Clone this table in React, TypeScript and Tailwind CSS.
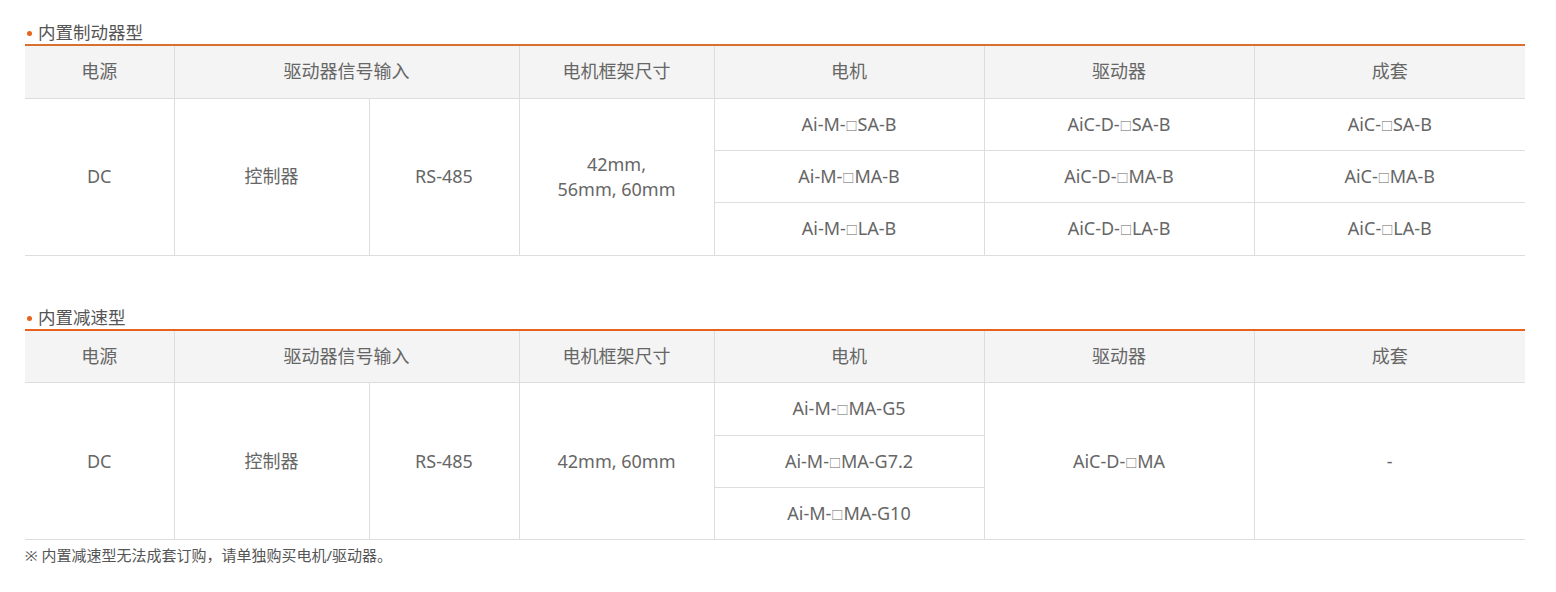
import React from "react";

const bd = "border-[#dddddd]";
const th = `h-[52px] bg-[#f4f4f4] font-normal text-center align-middle border-l ${bd}`;
const td = `h-[52.4px] text-center align-middle border-l border-b ${bd}`;

function Sq() {
  return <span className="text-[12px]">□</span>;
}

function Title({ children }: { children: React.ReactNode }) {
  return (
    <div className="flex items-center h-[22px] pl-[2px] text-[17.5px] text-[#555]">
      <span className="w-[5px] h-[5px] rounded-full bg-[#e8621c] mr-[6px] mt-[3px]" />
      {children}
    </div>
  );
}

function Header() {
  return (
    <thead>
      <tr className={`border-b ${bd}`}>
        <th className={th} style={{ borderLeft: "none" }}>电源</th>
        <th className={th} colSpan={2}>驱动器信号输入</th>
        <th className={th}>电机框架尺寸</th>
        <th className={th}>电机</th>
        <th className={th}>驱动器</th>
        <th className={th}>成套</th>
      </tr>
    </thead>
  );
}

function Cols() {
  return (
    <colgroup>
      <col className="w-[149px]" />
      <col className="w-[195px]" />
      <col className="w-[150px]" />
      <col className="w-[195px]" />
      <col className="w-[270px]" />
      <col className="w-[270px]" />
      <col className="w-[271px]" />
    </colgroup>
  );
}

export default function App() {
  return (
    <div
      className="w-[1556px] h-[592px] bg-white text-[#666] pt-[21px] pl-[25px]"
      style={{ fontFamily: '"Noto Sans", "Noto Sans CJK SC", sans-serif' }}
    >
      <div className="w-[1500px]">
        <Title>内置制动器型</Title>
        <div className="h-[2px] bg-[#d9702f] mt-[1px]" />
        <table className="w-[1500px] table-fixed border-collapse text-[18px]">
          <Cols />
          <Header />
          <tbody>
            <tr>
              <td className={td} style={{ borderLeft: "none" }} rowSpan={3}>DC</td>
              <td className={td} rowSpan={3}>控制器</td>
              <td className={td} rowSpan={3}>RS-485</td>
              <td className={`${td} leading-[25px]`} rowSpan={3}>42mm,<br />56mm, 60mm</td>
              <td className={td}>Ai-M-<Sq />SA-B</td>
              <td className={td}>AiC-D-<Sq />SA-B</td>
              <td className={td}>AiC-<Sq />SA-B</td>
            </tr>
            <tr>
              <td className={td}>Ai-M-<Sq />MA-B</td>
              <td className={td}>AiC-D-<Sq />MA-B</td>
              <td className={td}>AiC-<Sq />MA-B</td>
            </tr>
            <tr>
              <td className={td}>Ai-M-<Sq />LA-B</td>
              <td className={td}>AiC-D-<Sq />LA-B</td>
              <td className={td}>AiC-<Sq />LA-B</td>
            </tr>
          </tbody>
        </table>

        <div className="mt-[50px]">
          <Title>内置减速型</Title>
        </div>
        <div className="h-[2px] bg-[#e8621c] mt-[1px]" />
        <table className="w-[1500px] table-fixed border-collapse text-[18px]">
          <Cols />
          <Header />
          <tbody>
            <tr>
              <td className={td} style={{ borderLeft: "none" }} rowSpan={3}>DC</td>
              <td className={td} rowSpan={3}>控制器</td>
              <td className={td} rowSpan={3}>RS-485</td>
              <td className={td} rowSpan={3}>42mm, 60mm</td>
              <td className={td}>Ai-M-<Sq />MA-G5</td>
              <td className={td} rowSpan={3}>AiC-D-<Sq />MA</td>
              <td className={td} rowSpan={3}>-</td>
            </tr>
            <tr>
              <td className={td}>Ai-M-<Sq />MA-G7.2</td>
            </tr>
            <tr>
              <td className={td}>Ai-M-<Sq />MA-G10</td>
            </tr>
          </tbody>
        </table>
        <div className="mt-[4px] text-[15px] text-[#555] leading-[22px]">※ 内置减速型无法成套订购，请单独购买电机/驱动器。</div>
      </div>
    </div>
  );
}
